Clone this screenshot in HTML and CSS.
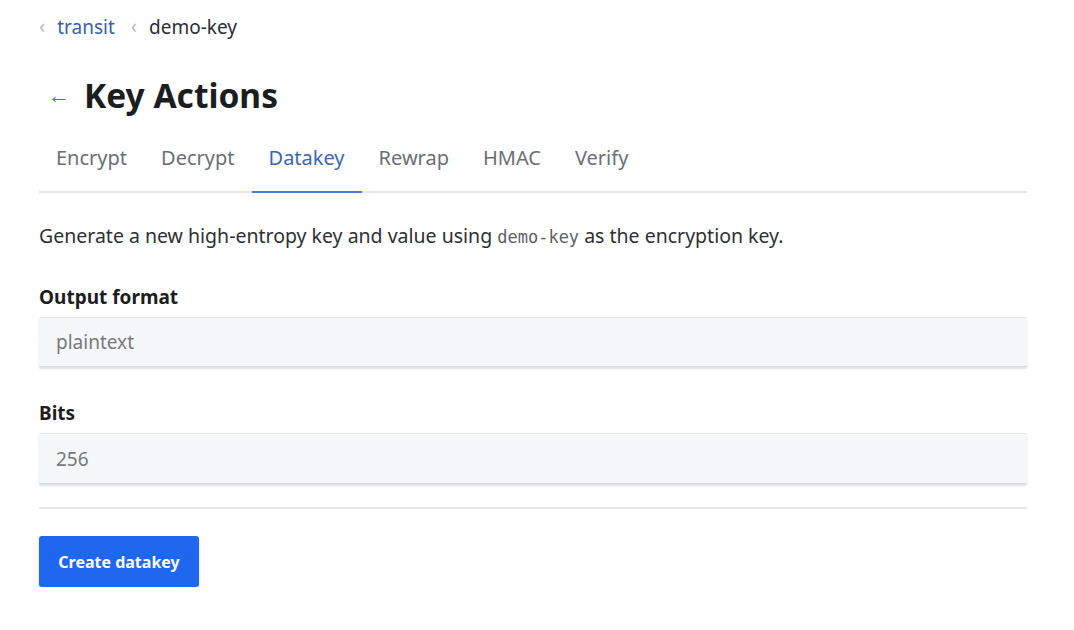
FILE: index.html
```html
<!DOCTYPE html>
<html>
<head>
<meta charset="utf-8">
<link rel="stylesheet" href="styles.css">
</head>
<body>
<div class="page">
  <nav class="crumbs">
    <a class="crumb link"><span class="chev">&lsaquo;</span>transit</a>
    <span class="crumb"><span class="chev">&lsaquo;</span>demo-key</span>
  </nav>
  <h1 class="title"><span class="back">&larr;</span>Key Actions</h1>
  <div class="tabs">
    <span class="tab">Encrypt</span>
    <span class="tab">Decrypt</span>
    <span class="tab active">Datakey</span>
    <span class="tab">Rewrap</span>
    <span class="tab">HMAC</span>
    <span class="tab">Verify</span>
  </div>
  <p class="desc">Generate a new high-entropy key and value using <code>demo-key</code> as the encryption key.</p>
  <div class="field">
    <label class="label">Output format</label>
    <div class="input">plaintext</div>
  </div>
  <div class="field">
    <label class="label">Bits</label>
    <div class="input">256</div>
  </div>
  <div class="footer">
    <button class="btn">Create datakey</button>
  </div>
</div>
</body>
</html>
```
FILE: styles.css
```css
html, body { margin: 0; padding: 0; background: #fff; }
body { font-family: "Noto Sans", "Open Sans", sans-serif; color: #1f2124; }
.page { padding: 14px 47px 0 39px; }
.crumbs { display: flex; gap: 16px; font-size: 19px; line-height: 26px; height: 26px; }
.crumb { color: #2b2e33; display: flex; align-items: center; }
.crumb.link { color: #3b5fa8; }
.chev { color: #b8bcc4; font-size: 20px; margin-right: 12px; margin-top: -2px; }
.title { margin: 35px 0 0 0; font-size: 33.5px; font-weight: 700; line-height: 40px; display: flex; align-items: center; color: #1b1d21; }
.back { color: #4775c4; font-size: 23px; font-weight: 400; margin: -2px 14px 0 8px; }
.tabs { display: flex; margin-top: 21px; border-bottom: 2px solid #e6e7ea; }
.tab { padding: 10px 17px 21px; font-size: 20px; line-height: 24px; color: #6b6f76; margin-bottom: -2px; border-bottom: 2px solid transparent; }
.tab.active { color: #3d66b3; border-bottom-color: #4c7dd4; }
.desc { margin: 31px 0 0 0; font-size: 19.5px; line-height: 24px; color: #2d3034; }
.desc code { font-family: "DejaVu Sans Mono", monospace; font-size: 17px; color: #5d6168; }
.label { display: block; font-size: 19px; font-weight: 700; margin-top: 36px; line-height: 24px; color: #1b1d21; }
.field + .field .label { margin-top: 34px; }
.input { margin-top: 8px; height: 50px; box-sizing: border-box; background: #f6f7f9; border-top: 1px solid #e4e6ea; border-bottom: 1px solid #d9dbe0; box-shadow: 0 2px 2px rgba(0,0,0,0.12); padding: 0 17px; display: flex; align-items: center; font-size: 19px; color: #77797e; border-radius: 2px; }
.field + .field .input { margin-top: 8px; height: 51px; }
.footer { margin-top: 23px; border-top: 2px solid #e6e7ea; padding-top: 27px; }
.btn { font-family: "Noto Sans", sans-serif; background: #1f67ee; color: #fff; font-weight: 700; font-size: 16px; border: none; border-radius: 3px; height: 51px; width: 160px; padding: 0; box-shadow: 0 2px 3px rgba(0,0,0,0.18); }
```
